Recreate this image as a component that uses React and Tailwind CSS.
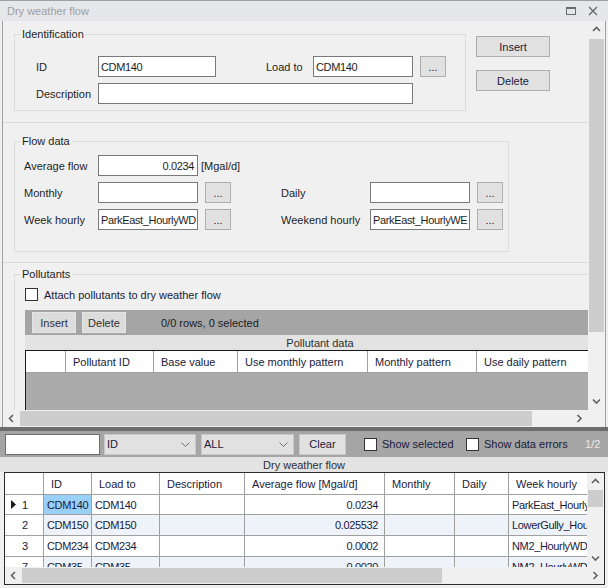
import React from 'react';

const Chevron = ({ dir }) => {
  const paths = {
    up: 'M1 5 L4.5 1.5 L8 5',
    down: 'M1 1.5 L4.5 5 L8 1.5',
    left: 'M5 1 L1.5 4.5 L5 8',
    right: 'M1.5 1 L5 4.5 L1.5 8',
  };
  const vertical = dir === 'up' || dir === 'down';
  return (
    <svg width={vertical ? 9 : 7} height={vertical ? 7 : 9} viewBox={vertical ? '0 0 9 7' : '0 0 7 9'}>
      <path d={paths[dir]} fill="none" stroke="#606060" strokeWidth="1.6" />
    </svg>
  );
};

const ComboChevron = () => (
  <svg width="9" height="5" viewBox="0 0 9 5">
    <path d="M0.5 0.5 L4.5 4.5 L8.5 0.5" fill="none" stroke="#707070" strokeWidth="1" />
  </svg>
);

const TextBox = ({ value = '', className = '', right }) => (
  <div
    className={`h-[21px] border border-[#7a7a7a] bg-white px-[2px] flex items-center overflow-hidden whitespace-nowrap tracking-[-0.35px] ${right ? 'justify-end' : ''} ${className}`}
  >
    {value}
  </div>
);

const Btn = ({ children, className = '' }) => (
  <div className={`h-[21px] border border-[#adadad] bg-[#e1e1e1] flex items-center justify-center text-[#1a1a3a] ${className}`}>
    {children}
  </div>
);

const Dots = () => <Btn className="w-[26px] ml-[7px]">...</Btn>;

const Check = () => <div className="w-[13px] h-[13px] border border-[#333333] bg-white shrink-0" />;

const Label = ({ children, className = '' }) => <span className={`shrink-0 whitespace-nowrap ${className}`}>{children}</span>;

const TitleBar = () => (
  <div className="h-[21px] shrink-0 bg-[#e6e7ea] border-t border-[#a0a0a0] flex items-center">
    <span className="ml-[7px] text-[#a0a0a0] text-[11px]">Dry weather flow</span>
    <div className="ml-auto flex items-center">
      <div className="w-[10px] h-[8px] border border-[#6a6a6a] border-t-[2px]" />
      <svg className="ml-[12px] mr-[10px]" width="10" height="10" viewBox="0 0 10 10">
        <path d="M1 1 L9 9 M9 1 L1 9" stroke="#6a6a6a" strokeWidth="1.4" />
      </svg>
    </div>
  </div>
);

const VScroll = ({ thumbTop, thumbHeight }) => (
  <div className="w-[17px] shrink-0 bg-[#f0f0f0] flex flex-col">
    <div className="h-[17px] flex items-center justify-center"><Chevron dir="up" /></div>
    <div className="flex-1 flex flex-col">
      <div style={{ height: thumbTop }} />
      <div className="mx-[1px] bg-[#cdcdcd]" style={{ height: thumbHeight }} />
    </div>
    <div className="h-[17px] flex items-center justify-center"><Chevron dir="down" /></div>
  </div>
);

const HScroll = ({ thumbWidth, className = '' }) => (
  <div className={`h-[17px] bg-[#f0f0f0] flex items-center ${className}`}>
    <div className="w-[17px] h-full flex items-center justify-center shrink-0"><Chevron dir="left" /></div>
    <div className="flex-1 h-full flex items-center">
      <div className="h-[15px] bg-[#cdcdcd]" style={{ width: thumbWidth }} />
    </div>
    <div className="w-[17px] h-full flex items-center justify-center shrink-0"><Chevron dir="right" /></div>
  </div>
);

const Identification = () => (
  <div className="h-[102px] shrink-0 border-b border-[#dadada] flex">
    <fieldset className="ml-[11px] mt-[6px] w-[452px] h-[84px] border border-[#dcdcdc] p-0 m-0">
      <legend className="ml-[5px] px-[2px] leading-[14px] text-[#1e1e1e]">Identification</legend>
      <div className="pt-[15px] pl-[21px]">
        <div className="flex items-center">
          <Label className="w-[62px]">ID</Label>
          <TextBox className="w-[118px]" value="CDM140" />
          <Label className="ml-[50px] w-[47px]">Load to</Label>
          <TextBox className="w-[100px]" value="CDM140" />
          <Dots />
        </div>
        <div className="flex items-center mt-[6px]">
          <Label className="w-[62px]">Description</Label>
          <TextBox className="w-[315px]" />
        </div>
      </div>
    </fieldset>
    <div className="ml-[10px] mt-[15px] flex flex-col gap-[13px]">
      <Btn className="w-[74px]">Insert</Btn>
      <Btn className="w-[74px]">Delete</Btn>
    </div>
  </div>
);

const FlowData = () => (
  <div className="h-[140px] shrink-0 border-b border-[#dadada] flex">
    <fieldset className="ml-[11px] mt-[11px] w-[495px] h-[118px] border border-[#dcdcdc] p-0 m-0">
      <legend className="ml-[5px] px-[2px] leading-[14px]">Flow data</legend>
      <div className="pt-[7px] pl-[9px]">
        <div className="flex items-center">
          <Label className="w-[74px]">Average flow</Label>
          <TextBox className="w-[100px] pr-[3px]" right value="0.0234" />
          <Label className="ml-[3px]">[Mgal/d]</Label>
        </div>
        <div className="flex items-center mt-[6px]">
          <Label className="w-[74px]">Monthly</Label>
          <TextBox className="w-[100px]" />
          <Dots />
          <Label className="ml-[50px] w-[89px]">Daily</Label>
          <TextBox className="w-[100px]" />
          <Dots />
        </div>
        <div className="flex items-center mt-[6px]">
          <Label className="w-[74px]">Week hourly</Label>
          <TextBox className="w-[100px]" value="ParkEast_HourlyWD" />
          <Dots />
          <Label className="ml-[50px] w-[89px]">Weekend hourly</Label>
          <TextBox className="w-[100px]" value="ParkEast_HourlyWE" />
          <Dots />
        </div>
      </div>
    </fieldset>
  </div>
);

const pollutantCols = [
  ['', 40],
  ['Pollutant ID', 88],
  ['Base value', 84],
  ['Use monthly pattern', 130],
  ['Monthly pattern', 109],
  ['Use daily pattern', 130],
];

const Pollutants = () => (
  <div className="flex-1 flex">
    <fieldset className="ml-[11px] mt-[4px] w-[640px] h-[200px] shrink-0 border border-[#dcdcdc] p-0 m-0">
      <legend className="ml-[5px] px-[2px] leading-[14px]">Pollutants</legend>
      <div className="pt-[7px] pl-[10px]">
        <div className="flex items-center h-[13px]">
          <Check />
          <span className="ml-[6px] text-[#1a1a3a]">Attach pollutants to dry weather flow</span>
        </div>
        <div className="mt-[9px] w-[590px]">
          <div className="h-[25px] bg-[#a5a5a5] flex items-center">
            <div className="ml-[7px] w-[44px] h-[21px] bg-[#dcdcdc] border border-[#e6e6e6] flex items-center justify-center text-[#303030]">Insert</div>
            <div className="ml-[6px] w-[44px] h-[21px] bg-[#dcdcdc] border border-[#e6e6e6] flex items-center justify-center text-[#303030]">Delete</div>
            <span className="ml-[35px] text-[#202020]">0/0 rows, 0 selected</span>
          </div>
          <div className="h-[15px] bg-[#e3e3e3] flex items-center justify-center text-[#303030]">Pollutant data</div>
          <div className="border-l border-t border-[#1a1a1a] bg-[#ababab] h-[80px]">
            <div className="flex h-[22px] bg-white border-b border-[#a0a0a0]">
              {pollutantCols.map(([name, w], i) => (
                <div key={i} className="border-r border-[#a0a0a0] flex items-center pl-[7px] whitespace-nowrap shrink-0 text-[#1a1a3a]" style={{ width: w }}>
                  {name}
                </div>
              ))}
            </div>
          </div>
        </div>
      </div>
    </fieldset>
  </div>
);

const TopPane = () => (
  <div className="w-[602px] flex flex-col">
    <div className="flex h-[389px]">
      <div className="w-[585px] overflow-hidden flex flex-col">
        <Identification />
        <FlowData />
        <Pollutants />
      </div>
      <VScroll thumbTop={1} thumbHeight={293} />
    </div>
    <div className="flex">
      <HScroll className="w-[585px]" thumbWidth={512} />
      <div className="w-[17px] h-[17px] bg-[#f0f0f0]" />
    </div>
  </div>
);

const Combo = ({ value, className = '' }) => (
  <div className={`h-[21px] bg-[#e1e1e1] border border-[#c8c8c8] flex items-center pl-[2px] pr-[5px] text-[#1a1a3a] ${className}`}>
    <span>{value}</span>
    <span className="ml-auto flex"><ComboChevron /></span>
  </div>
);

const FilterBar = () => (
  <div className="h-[26px] shrink-0 bg-[#a5a5a5] flex items-center pl-[5px] overflow-hidden whitespace-nowrap">
    <div className="w-[95px] h-[21px] bg-white border border-[#6e6e6e] shrink-0" />
    <Combo value="ID" className="ml-[4px] w-[92px] shrink-0" />
    <Combo value="ALL" className="ml-[5px] w-[93px] shrink-0" />
    <div className="ml-[5px] w-[47px] h-[21px] bg-[#e1e1e1] border border-[#c8c8c8] flex items-center justify-center text-[#1a1a3a] shrink-0">Clear</div>
    <div className="ml-[18px] w-[102px] flex items-center shrink-0">
      <Check />
      <span className="ml-[5px] text-[#1a1a3a]">Show selected</span>
    </div>
    <div className="w-[119px] flex items-center shrink-0">
      <Check />
      <span className="ml-[5px] text-[#1a1a3a]">Show data errors</span>
    </div>
    <span className="text-[#e8e8e8]">1/2</span>
  </div>
);

const gridCols = [
  ['', 39],
  ['ID', 48],
  ['Load to', 68],
  ['Description', 85],
  ['Average flow [Mgal/d]', 140],
  ['Monthly', 70],
  ['Daily', 54],
  ['Week hourly', 110],
];

const rows = [
  { n: '1', id: 'CDM140', load: 'CDM140', avg: '0.0234', week: 'ParkEast_HourlyWD', current: true, h: 20 },
  { n: '2', id: 'CDM150', load: 'CDM150', avg: '0.025532', week: 'LowerGully_HourlyWD', alt: true, h: 21 },
  { n: '3', id: 'CDM234', load: 'CDM234', avg: '0.0002', week: 'NM2_HourlyWD', h: 21 },
  { n: '7', id: 'CDM35', load: 'CDM35', avg: '0.0020', week: 'NM2_HourlyWD', alt: true, h: 21 },
];

const DataGrid = () => (
  <div className="ml-[4px] w-[601px] h-[113px] border border-[#2b2b2b] bg-white flex flex-col text-[#1a1a3a]">
    <div className="flex h-[94px]">
      <div className="w-[583px] overflow-hidden">
        <div className="flex h-[22px] border-b border-[#a0a0a0]">
          {gridCols.map(([name, w], i) => (
            <div key={i} className="border-r border-[#a0a0a0] flex items-center pl-[7px] whitespace-nowrap shrink-0" style={{ width: w }}>
              {name}
            </div>
          ))}
        </div>
        {rows.map((r) => (
          <div key={r.n} className="flex border-b border-[#a0a0a0] tracking-[-0.35px]" style={{ height: r.h }}>
            <div className="w-[39px] shrink-0 border-r border-[#a0a0a0] flex items-center bg-white">
              {r.current ? (
                <>
                  <svg className="ml-[6px]" width="5" height="9" viewBox="0 0 5 9">
                    <path d="M0 0 L5 4.5 L0 9 Z" fill="#1a1a1a" />
                  </svg>
                  <span className="ml-[6px]">{r.n}</span>
                </>
              ) : (
                <span className="ml-[17px]">{r.n}</span>
              )}
            </div>
            <div className={`w-[48px] shrink-0 border-r border-[#a0a0a0] flex items-center pl-[3px] ${r.current ? 'bg-[#99d0f8]' : r.alt ? 'bg-[#eef3fa]' : ''}`}>{r.id}</div>
            <div className={`w-[68px] shrink-0 border-r border-[#a0a0a0] flex items-center pl-[3px] ${r.alt ? 'bg-[#eef3fa]' : ''}`}>{r.load}</div>
            <div className={`w-[85px] shrink-0 border-r border-[#a0a0a0] ${r.alt ? 'bg-[#eef3fa]' : ''}`} />
            <div className={`w-[140px] shrink-0 border-r border-[#a0a0a0] flex items-center justify-end pr-[6px] ${r.alt ? 'bg-[#eef3fa]' : ''}`}>{r.avg}</div>
            <div className={`w-[70px] shrink-0 border-r border-[#a0a0a0] ${r.alt ? 'bg-[#eef3fa]' : ''}`} />
            <div className={`w-[54px] shrink-0 border-r border-[#a0a0a0] ${r.alt ? 'bg-[#eef3fa]' : ''}`} />
            <div className={`w-[110px] shrink-0 flex items-center pl-[3px] whitespace-nowrap ${r.alt ? 'bg-[#eef3fa]' : ''}`}>{r.week}</div>
          </div>
        ))}
      </div>
      <VScroll thumbTop={0} thumbHeight={17} />
    </div>
    <HScroll className="w-[599px]" thumbWidth={420} />
  </div>
);

export default function App() {
  return (
    <div className="w-[608px] h-[588px] overflow-hidden bg-[#f0f0f0] font-['Liberation_Sans',Arial,sans-serif] text-[11px] leading-[14px] text-[#1e1e1e] flex flex-col">
      <TitleBar />
      <div className="flex h-[406px] shrink-0">
        <div className="w-[2px]" />
        <div className="w-[1px] bg-[#a0a0a0]" />
        <TopPane />
        <div className="w-[1px] bg-[#a0a0a0]" />
        <div className="w-[2px]" />
      </div>
      <div className="h-[4px] shrink-0 bg-[#6d6d6d]" />
      <FilterBar />
      <div className="h-[15px] shrink-0 bg-[#e3e3e3] flex items-center justify-center text-[#303030]">Dry weather flow</div>
      <DataGrid />
    </div>
  );
}
